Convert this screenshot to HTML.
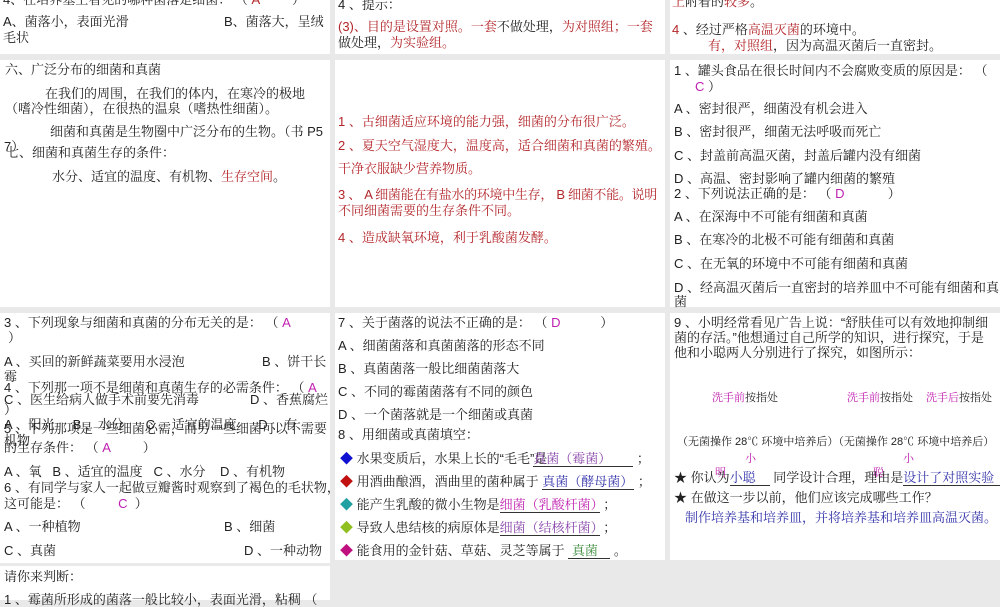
<!DOCTYPE html>
<html><head><meta charset="utf-8"><style>
body{margin:0;width:1000px;height:600px;background:#e9e9e9;position:relative;overflow:hidden;font-family:"Liberation Sans","Noto Serif CJK SC",serif;font-size:13px;color:#222}
.p{position:absolute;background:#fff}
.t{position:absolute;white-space:nowrap;line-height:15px}
.r{color:#b3262a}.m{color:#c020b0}.b{color:#3333aa}.g{color:#3a8a3a}.pu{color:#8844aa}
.u{display:inline-block;border-bottom:1px solid #333;line-height:14px}
.s{font-size:11px}
</style></head><body>
<div class="p" style="left:0;top:0;width:330px;height:54px"></div>
<div class="p" style="left:335px;top:0;width:330px;height:54px"></div>
<div class="p" style="left:670px;top:0;width:330px;height:54px"></div>
<div class="p" style="left:0;top:60px;width:330px;height:247px"></div>
<div class="p" style="left:335px;top:60px;width:330px;height:247px"></div>
<div class="p" style="left:670px;top:60px;width:330px;height:247px"></div>
<div class="p" style="left:0;top:313px;width:330px;height:250px"></div>
<div class="p" style="left:335px;top:313px;width:330px;height:247px"></div>
<div class="p" style="left:670px;top:313px;width:330px;height:247px"></div>
<div class="p" style="left:0;top:566px;width:330px;height:34px"></div>

<div class="t" style="left:3px;top:-8px">4、在培养基上看见的哪种菌落是细菌： （ <span class="r">A</span> &nbsp;&nbsp;&nbsp;&nbsp;&nbsp;&nbsp;&nbsp;&nbsp;）</div>
<div class="t" style="left:3px;top:14px">A、菌落小，表面光滑</div>
<div class="t" style="left:224px;top:14px">B、菌落大，呈绒</div>
<div class="t" style="left:3px;top:30px">毛状</div>

<div class="t" style="left:5px;top:62px">六、广泛分布的细菌和真菌</div>
<div class="t" style="left:45px;top:86px">在我们的周围，在我们的体内，在寒冷的极地</div>
<div class="t" style="left:5px;top:101px">（嗜冷性细菌），在很热的温泉（嗜热性细菌）。</div>
<div class="t" style="left:50px;top:124px">细菌和真菌是生物圈中广泛分布的生物。（书 P5</div>
<div class="t" style="left:4px;top:139px">7）</div>
<div class="t" style="left:6px;top:145px">七、细菌和真菌生存的条件：</div>
<div class="t" style="left:52px;top:169px">水分、适宜的温度、有机物、<span class="r">生存空间</span>。</div>

<div class="t" style="left:338px;top:-3px">4 、提示：</div>
<div class="t" style="left:338px;top:19px"><span class="r">(3)、目的是设置对照。一套</span>不做处理，<span class="r">为对照组；一套</span></div>
<div class="t" style="left:338px;top:35px">做处理，<span class="r">为实验组。</span></div>

<div class="t r" style="left:338px;top:114px">1 、古细菌适应环境的能力强，细菌的分布很广泛。</div>
<div class="t r" style="left:338px;top:138px">2 、夏天空气湿度大，温度高，适合细菌和真菌的繁殖。</div>
<div class="t r" style="left:338px;top:161px">干净衣服缺少营养物质。</div>
<div class="t r" style="left:338px;top:187px;letter-spacing:-0.3px">3 、 A 细菌能在有盐水的环境中生存， B 细菌不能。说明</div>
<div class="t r" style="left:338px;top:203px">不同细菌需要的生存条件不同。</div>
<div class="t r" style="left:338px;top:230px">4 、造成缺氧环境，利于乳酸菌发酵。</div>

<div class="t" style="left:672px;top:-6px"><span class="r">上</span>附着的<span class="r">较多</span>。</div>
<div class="t" style="left:672px;top:22px"><span class="r">4</span> 、经过严格<span class="r">高温灭菌</span>的环境中。</div>
<div class="t" style="left:708px;top:38px"><span class="r">有，对照组</span>，因为高温灭菌后一直密封。</div>

<div class="t" style="left:674px;top:63px">1 、罐头食品在很长时间内不会腐败变质的原因是： （</div>
<div class="t" style="left:695px;top:79px"><span class="m">C</span> ）</div>
<div class="t" style="left:674px;top:101px">A 、密封很严，细菌没有机会进入</div>
<div class="t" style="left:674px;top:124px">B 、密封很严，细菌无法呼吸而死亡</div>
<div class="t" style="left:674px;top:148px">C 、封盖前高温灭菌，封盖后罐内没有细菌</div>
<div class="t" style="left:674px;top:171px">D 、高温、密封影响了罐内细菌的繁殖</div>
<div class="t" style="left:674px;top:186px">2 、下列说法正确的是： （ <span class="m">D</span> &nbsp;&nbsp;&nbsp;&nbsp;&nbsp;&nbsp;&nbsp;&nbsp;&nbsp;&nbsp;&nbsp;）</div>
<div class="t" style="left:674px;top:209px">A 、在深海中不可能有细菌和真菌</div>
<div class="t" style="left:674px;top:232px">B 、在寒冷的北极不可能有细菌和真菌</div>
<div class="t" style="left:674px;top:256px">C 、在无氧的环境中不可能有细菌和真菌</div>
<div class="t" style="left:674px;top:280px">D 、经高温灭菌后一直密封的培养皿中不可能有细菌和真</div>
<div class="t" style="left:674px;top:294px">菌</div>

<div class="t" style="left:4px;top:315px">3 、下列现象与细菌和真菌的分布无关的是： （ <span class="m">A</span></div>
<div class="t" style="left:8px;top:330px">）</div>
<div class="t" style="left:4px;top:354px">A 、买回的新鲜蔬菜要用水浸泡</div>
<div class="t" style="left:262px;top:354px">B 、饼干长</div>
<div class="t" style="left:4px;top:369px">霉</div>
<div class="t" style="left:4px;top:380px">4 、下列那一项不是细菌和真菌生存的必需条件： （ <span class="m">A</span></div>
<div class="t" style="left:4px;top:392px">C 、医生给病人做手术前要先消毒</div>
<div class="t" style="left:250px;top:392px">D 、香蕉腐烂</div>
<div class="t" style="left:4px;top:402px">）</div>
<div class="t" style="left:4px;top:417px">A 、阳光 &nbsp;&nbsp;&nbsp; B 、水分 &nbsp;&nbsp;&nbsp;&nbsp; C 、适宜的温度 &nbsp;&nbsp;&nbsp;&nbsp; D 、有</div>
<div class="t" style="left:4px;top:421px">5 、下列那项是一些细菌必需，而另一些细菌可以不需要</div>
<div class="t" style="left:4px;top:433px">机物</div>
<div class="t" style="left:4px;top:440px">的生存条件： （ <span class="m">A</span> &nbsp;&nbsp;&nbsp;&nbsp;&nbsp;&nbsp;&nbsp;&nbsp;）</div>
<div class="t" style="left:4px;top:464px">A 、氧 &nbsp; B 、适宜的温度 &nbsp; C 、水分 &nbsp;&nbsp; D 、有机物</div>
<div class="t" style="left:4px;top:480px">6 、有同学与家人一起做豆瓣酱时观察到了褐色的毛状物，</div>
<div class="t" style="left:4px;top:496px">这可能是： （ &nbsp;&nbsp;&nbsp;&nbsp;&nbsp;&nbsp;&nbsp; <span class="m">C</span> &nbsp;）</div>
<div class="t" style="left:4px;top:519px">A 、一种植物</div>
<div class="t" style="left:224px;top:519px">B 、细菌</div>
<div class="t" style="left:4px;top:543px">C 、真菌</div>
<div class="t" style="left:244px;top:543px">D 、一种动物</div>
<div class="t" style="left:4px;top:569px">请你来判断：</div>
<div class="t" style="left:4px;top:592px">1 、霉菌所形成的菌落一般比较小，表面光滑，粘稠 （</div>

<div class="t" style="left:338px;top:315px">7 、关于菌落的说法不正确的是： （ <span class="m">D</span> &nbsp;&nbsp;&nbsp;&nbsp;&nbsp;&nbsp;&nbsp;&nbsp;&nbsp;&nbsp;）</div>
<div class="t" style="left:338px;top:338px">A 、细菌菌落和真菌菌落的形态不同</div>
<div class="t" style="left:338px;top:361px">B 、真菌菌落一般比细菌菌落大</div>
<div class="t" style="left:338px;top:384px">C 、不同的霉菌菌落有不同的颜色</div>
<div class="t" style="left:338px;top:407px">D 、一个菌落就是一个细菌或真菌</div>
<div class="t" style="left:338px;top:427px">8 、用细菌或真菌填空：</div>
<div class="t" style="left:340px;top:451px"><span style="color:#1010d0">◆</span> 水果变质后，水果上长的“毛毛”是<span class="u pu" style="width:100px;margin-left:-14px">真菌（霉菌）</span> ；</div>
<div class="t" style="left:340px;top:474px"><span style="color:#c01010">◆</span> 用酒曲酿酒，酒曲里的菌种属于 <span class="u b" style="width:92px">真菌（酵母菌）</span> ；</div>
<div class="t" style="left:340px;top:497px"><span style="color:#20a0a0">◆</span> 能产生乳酸的微小生物是<span class="u m" style="width:100px">细菌（乳酸杆菌）</span> ；</div>
<div class="t" style="left:340px;top:520px"><span style="color:#90c020">◆</span> 导致人患结核的病原体是<span class="u pu" style="width:100px">细菌（结核杆菌）</span> ；</div>
<div class="t" style="left:340px;top:543px"><span style="color:#c01080">◆</span> 能食用的金针菇、草菇、灵芝等属于 <span class="u g" style="width:42px">&nbsp;真菌</span> 。</div>

<div class="t" style="left:674px;top:315px">9 、小明经常看见广告上说：“舒肤佳可以有效地抑制细</div>
<div class="t" style="left:674px;top:330px">菌的存活。”他想通过自己所学的知识，进行探究，于是</div>
<div class="t" style="left:674px;top:345px">他和小聪两人分别进行了探究，如图所示：</div>
<div class="t s" style="left:712px;top:391px"><span class="m">洗手前</span>按指处</div>
<div class="t s" style="left:847px;top:391px"><span class="m">洗手前</span>按指处</div>
<div class="t s" style="left:926px;top:391px"><span class="m">洗手后</span>按指处</div>
<div class="t s" style="left:677px;top:435px">（无菌操作 28℃ 环境中培养后）（无菌操作 28℃ 环境中培养后）</div>
<div class="t s m" style="left:745px;top:452px">小</div>
<div class="t s m" style="left:903px;top:452px">小</div>
<div class="t s m" style="left:715px;top:466px">明</div>
<div class="t s m" style="left:873px;top:466px">聪</div>
<div class="t" style="left:674px;top:470px">★ 你认为<span class="u b" style="width:40px">小聪</span> 同学设计合理，理由是<span class="u b" style="width:98px">设计了对照实验</span> 。</div>
<div class="t" style="left:674px;top:490px">★ 在做这一步以前，他们应该完成哪些工作？</div>
<div class="t b" style="left:685px;top:510px">制作培养基和培养皿，并将培养基和培养皿高温灭菌。</div>
</body></html>
